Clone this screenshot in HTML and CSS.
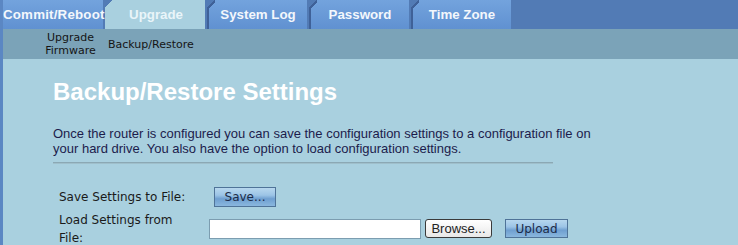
FILE: index.html
```html
<!DOCTYPE html>
<html>
<head>
<meta charset="utf-8">
<title>Backup/Restore Settings</title>
<link rel="stylesheet" href="styles.css">
</head>
<body>
<div class="page">
  <nav class="tabs">
    <a class="tab">Commit/Reboot</a>
    <a class="tab active">Upgrade</a>
    <a class="tab">System Log</a>
    <a class="tab">Password</a>
    <a class="tab">Time Zone</a>
  </nav>
  <nav class="subnav">
    <a class="sub first">Upgrade<br>Firmware</a>
    <a class="sub">Backup/Restore</a>
  </nav>
  <main class="content">
    <h1 class="title">Backup/Restore Settings</h1>
    <p class="intro">Once the router is configured you can save the configuration settings to a configuration file on your hard drive. You also have the option to load configuration settings.</p>
    <div class="rule"></div>
    <div class="form">
      <div class="label">Save Settings to File:</div>
      <div class="field"><button class="btn blue save">Save...</button></div>
      <div class="label">Load Settings from File:</div>
      <div class="field">
        <input class="path" type="text">
        <button class="btn browse">Browse...</button>
        <button class="btn blue upload">Upload</button>
      </div>
    </div>
  </main>
</div>
</body>
</html>
```
FILE: styles.css
```css
html, body {
  margin: 0;
  padding: 0;
  height: 100%;
  background: #a9d0df;
}
.page {
  min-height: 100%;
  border-left: 3px solid #5b87c3;
  box-sizing: border-box;
  font-family: "Liberation Sans", Arial, sans-serif;
}
.tabs {
  display: flex;
  height: 29px;
  background: #527bb5;
  gap: 2px;
}
.tab {
  position: relative;
  width: 100px;
  box-sizing: border-box;
  border-left: 2px solid #3f6198;
  background: linear-gradient(#73a3dd, #6091d1);
  color: #f3f7fc;
  font: bold 13.3px "Liberation Sans", Arial, sans-serif;
  text-align: center;
  line-height: 29px;
  white-space: nowrap;
}
.tab::before {
  content: "";
  position: absolute;
  top: 0;
  left: -2px;
  width: 8px;
  height: 8px;
  background: linear-gradient(to bottom right, #527bb5 0 48%, #3f6198 48% 68%, transparent 68%);
}
.tab:first-child {
  border-left: 0;
  letter-spacing: 0.2px;
}
.tab:first-child::before {
  display: none;
}
.tab.active {
  border-left-color: #a9d0df;
  background: #a9d0df;
  color: #e9f5f9;
}
.tab.active::before {
  background: linear-gradient(to bottom right, #527bb5 0 50%, transparent 50%);
}
.subnav {
  display: flex;
  align-items: center;
  height: 30px;
  background: #7ba3b8;
  padding-left: 38px;
  gap: 8px;
  font: 11px "DejaVu Sans", Verdana, sans-serif;
  color: #151515;
  line-height: 13px;
}
.sub.first {
  width: 59px;
  text-align: center;
}
.content {
  padding: 19px 0 0 50px;
}
.title {
  margin: 0;
  font: bold 24px "Liberation Sans", Arial, sans-serif;
  line-height: 28px;
  color: #ffffff;
}
.intro {
  margin: 20px 0 0;
  width: 565px;
  font: 13px "Liberation Sans", Arial, sans-serif;
  line-height: 15px;
  color: #1c1c4c;
}
.rule {
  width: 500px;
  height: 1px;
  margin-top: 6px;
  background: #8ba8b4;
  border-bottom: 1px solid #9fbfcb;
}
.form {
  display: grid;
  grid-template-columns: 150px auto;
  grid-template-rows: 20px 37px;
  row-gap: 3px;
  align-items: center;
  margin: 23px 0 0 6px;
  font: 12px "DejaVu Sans", Verdana, sans-serif;
  color: #1a1a1a;
  line-height: 18px;
}
.label {
  padding-right: 10px;
}
.field {
  display: flex;
  align-items: center;
}
.btn {
  box-sizing: border-box;
  height: 19px;
  padding: 0;
  font: 12px "DejaVu Sans", Verdana, sans-serif;
  color: #1b2b48;
}
.btn.blue {
  border: 1px solid #4f7398;
  background: linear-gradient(#b7d7ee 0%, #9cc4e6 40%, #6f9fd0 60%, #8ab7de 100%);
}
.save {
  width: 62px;
  height: 20px;
  margin-left: 5px;
}
.path {
  box-sizing: border-box;
  width: 212px;
  height: 20px;
  margin: 0;
  border: 1px solid #7c9db0;
  background: #ffffff;
}
.browse {
  width: 67px;
  margin-left: 4px;
  border: 1px solid #3a3a3a;
  border-radius: 3px;
  background: linear-gradient(#ffffff, #e8e8e8);
  font: 13px "Liberation Sans", Arial, sans-serif;
  color: #222;
}
.upload {
  width: 63px;
  margin-left: 13px;
}
```
